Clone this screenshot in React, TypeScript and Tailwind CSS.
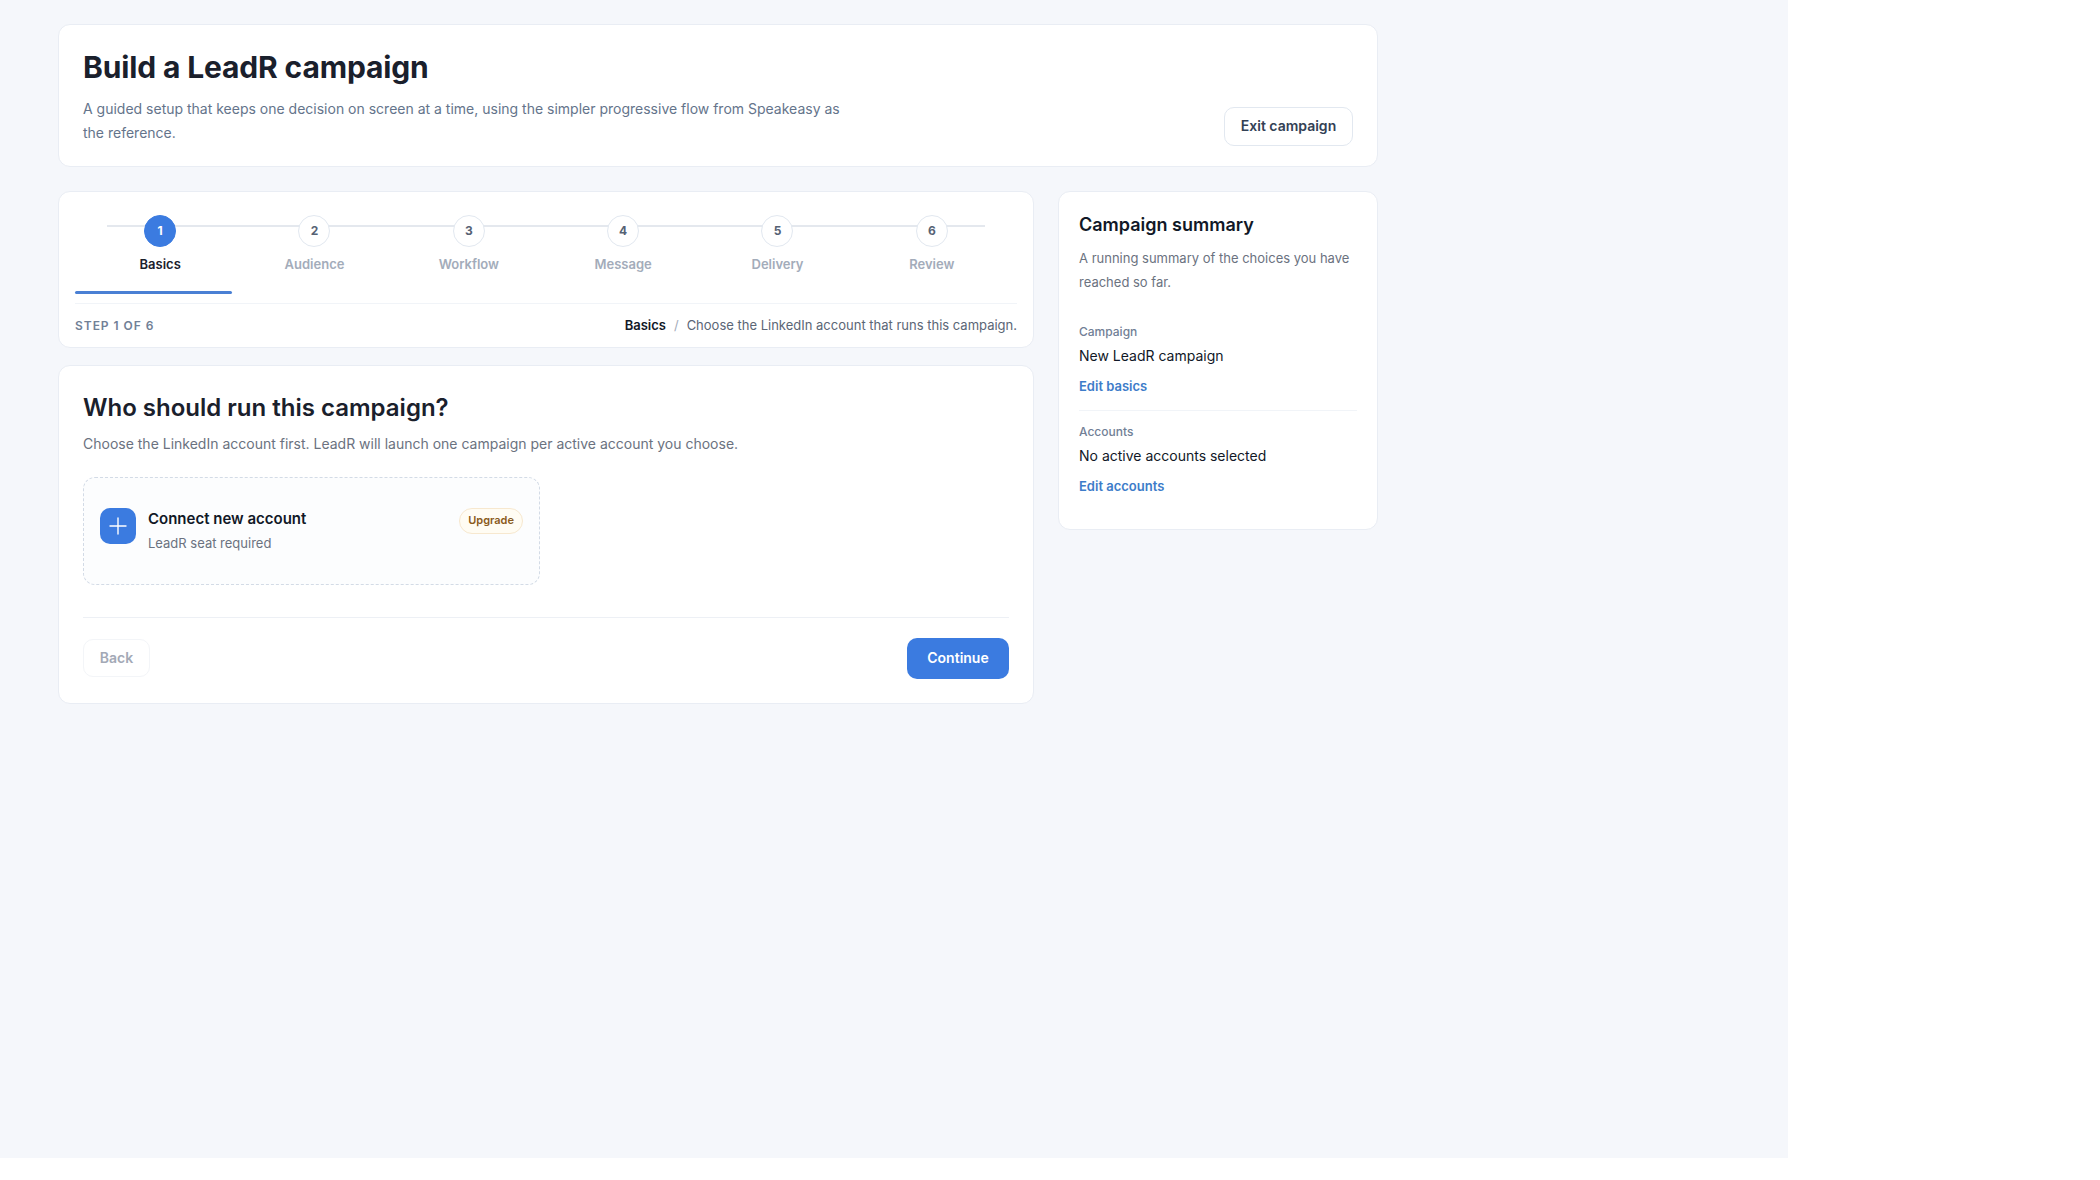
import React from 'react';
import clsx from 'clsx';

const STEPS = ['Basics', 'Audience', 'Workflow', 'Message', 'Delivery', 'Review'];

const SUMMARY = [
  { label: 'Campaign', value: 'New LeadR campaign', action: 'Edit basics' },
  { label: 'Accounts', value: 'No active accounts selected', action: 'Edit accounts' },
];

const card = 'rounded-xl border border-[#e9edf4] bg-white';

const Header: React.FC = () => (
  <header className={clsx(card, 'flex h-[143px] items-end justify-between px-6 pt-5 pb-5')}>
    <div className="mb-px w-[768px]">
      <h1 className="text-[30px] leading-[44px] font-bold tracking-[-0.14px] text-[#1a202c]">Build a LeadR campaign</h1>
      <p className="mt-2 text-sm leading-6 text-[#64748b]">
        A guided setup that keeps one decision on screen at a time, using the simpler progressive flow from Speakeasy as
        the reference.
      </p>
    </div>
    <button className="h-[39px] w-[129px] rounded-[10px] border border-[#e2e8f0] bg-white pb-0.5 text-sm font-semibold text-[#334155]">
      Exit campaign
    </button>
  </header>
);

const Stepper: React.FC<{ current: number }> = ({ current }) => (
  <section className={clsx(card, 'flex h-[157px] flex-col px-4')}>
    <div className="relative grid grid-cols-6 px-2 pt-[23px]">
      <div className="absolute top-[33px] right-8 left-8 h-0.5 bg-[#e4e8ee]" />
      {STEPS.map((step, idx) => (
        <div key={step} className="relative flex flex-col items-center gap-2">
          <span
            className={clsx(
              'flex size-8 items-center justify-center rounded-full border text-xs font-bold',
              idx === current ? 'border-[#3b7be0] bg-[#3b7be0] text-white' : 'border-[#e2e8f0] bg-white text-[#566274]'
            )}
          >
            {idx + 1}
          </span>
          <span className={clsx('text-[13px] leading-[18px] font-semibold', idx === current ? 'text-[#1a202c]' : 'text-[#a3acba]')}>
            {step}
          </span>
        </div>
      ))}
    </div>
    <div className="mt-[18px] h-[3px] rounded-full">
      <div className="h-full rounded-full bg-[#4a80d4]" style={{ width: `${((current + 1) / STEPS.length) * 100}%` }} />
    </div>
    <div className="mt-[9px] flex flex-1 items-center justify-between border-t border-[#f1f4f8] text-[13px]">
      <span className="text-xs font-semibold tracking-[0.08em] text-[#718096] uppercase">
        Step {current + 1} of {STEPS.length}
      </span>
      <p className="flex gap-2 text-[#5b6676]">
        <span className="font-semibold text-[#111827]">{STEPS[current]}</span>
        <span className="text-[#a3acba]">/</span>
        <span>Choose the LinkedIn account that runs this campaign.</span>
      </p>
    </div>
  </section>
);

const AccountStep: React.FC = () => (
  <section className={clsx(card, 'h-[339px] px-6 pt-6')}>
    <h2 className="text-2xl leading-9 font-semibold text-[#1a202c]">Who should run this campaign?</h2>
    <p className="mt-1.5 text-sm leading-6 text-[#6b7280]">
      Choose the LinkedIn account first. LeadR will launch one campaign per active account you choose.
    </p>

    <div className="mt-[21px] grid grid-cols-2 gap-3">
      <div className="flex h-[108px] items-start rounded-xl border border-dashed border-[#d3dbe6] bg-[#fcfdfe] px-4 pt-[30px]">
        <div className="flex size-9 items-center justify-center rounded-[10px] bg-[#3b7be0]">
          <svg viewBox="0 0 18 18" className="size-[18px]" stroke="white" strokeWidth="1.4" strokeLinecap="round">
            <path d="M9 1v16M1 9h16" />
          </svg>
        </div>
        <div className="ml-3 flex-1">
          <h3 className="text-[15px] leading-[22px] font-semibold text-[#111827]">Connect new account</h3>
          <p className="mt-[3px] text-[13px] leading-[21px] text-[#6b7280]">LeadR seat required</p>
        </div>
        <span className="flex h-[26px] items-center rounded-full border border-[#f7e8cf] bg-[#fffcf3] px-2 pb-px text-[11px] font-semibold text-[#8a5a1c]">
          Upgrade
        </span>
      </div>
    </div>

    <div className="mt-8 flex items-start justify-between border-t border-[#edf0f5] pt-5">
      <button className="mt-px h-[38px] w-[67px] rounded-[10px] border border-[#f3f5f8] bg-white text-sm font-semibold text-[#a3a9b6]">
        Back
      </button>
      <button className="h-[41px] w-[102px] rounded-[10px] bg-[#3b7be0] pb-0.5 text-sm font-semibold text-white">
        Continue
      </button>
    </div>
  </section>
);

const Summary: React.FC = () => (
  <aside className={clsx(card, 'h-[339px] w-80 shrink-0 px-5 pt-5')}>
    <h2 className="text-lg leading-[26px] font-semibold text-[#111827]">Campaign summary</h2>
    <p className="mt-2 text-[13px] leading-6 text-[#6b7280]">A running summary of the choices you have reached so far.</p>
    <div className="mt-[17px] divide-y divide-[#f1f4f8]">
      {SUMMARY.map(item => (
        <div key={item.label} className="flex h-[100px] flex-col items-start pt-3">
          <span className="text-xs leading-[18px] font-medium text-[#718096]">{item.label}</span>
          <span className="mt-1 text-sm leading-[22px] text-[#111827]">{item.value}</span>
          <button className="mt-[9px] text-[13px] leading-5 font-semibold text-[#3d7cc9]">{item.action}</button>
        </div>
      ))}
    </div>
  </aside>
);

export default function App() {
  return (
    <div className="h-[1180px] w-[2100px] bg-white font-['Inter',sans-serif]">
      <div className="h-[1158px] w-[1788px] bg-[#f5f7fb] pt-6 pl-[58px]">
        <main className="w-[1320px]">
          <Header />
          <div className="mt-6 flex items-start gap-6">
            <div className="flex flex-1 flex-col gap-[17px]">
              <Stepper current={0} />
              <AccountStep />
            </div>
            <Summary />
          </div>
        </main>
      </div>
    </div>
  );
}
